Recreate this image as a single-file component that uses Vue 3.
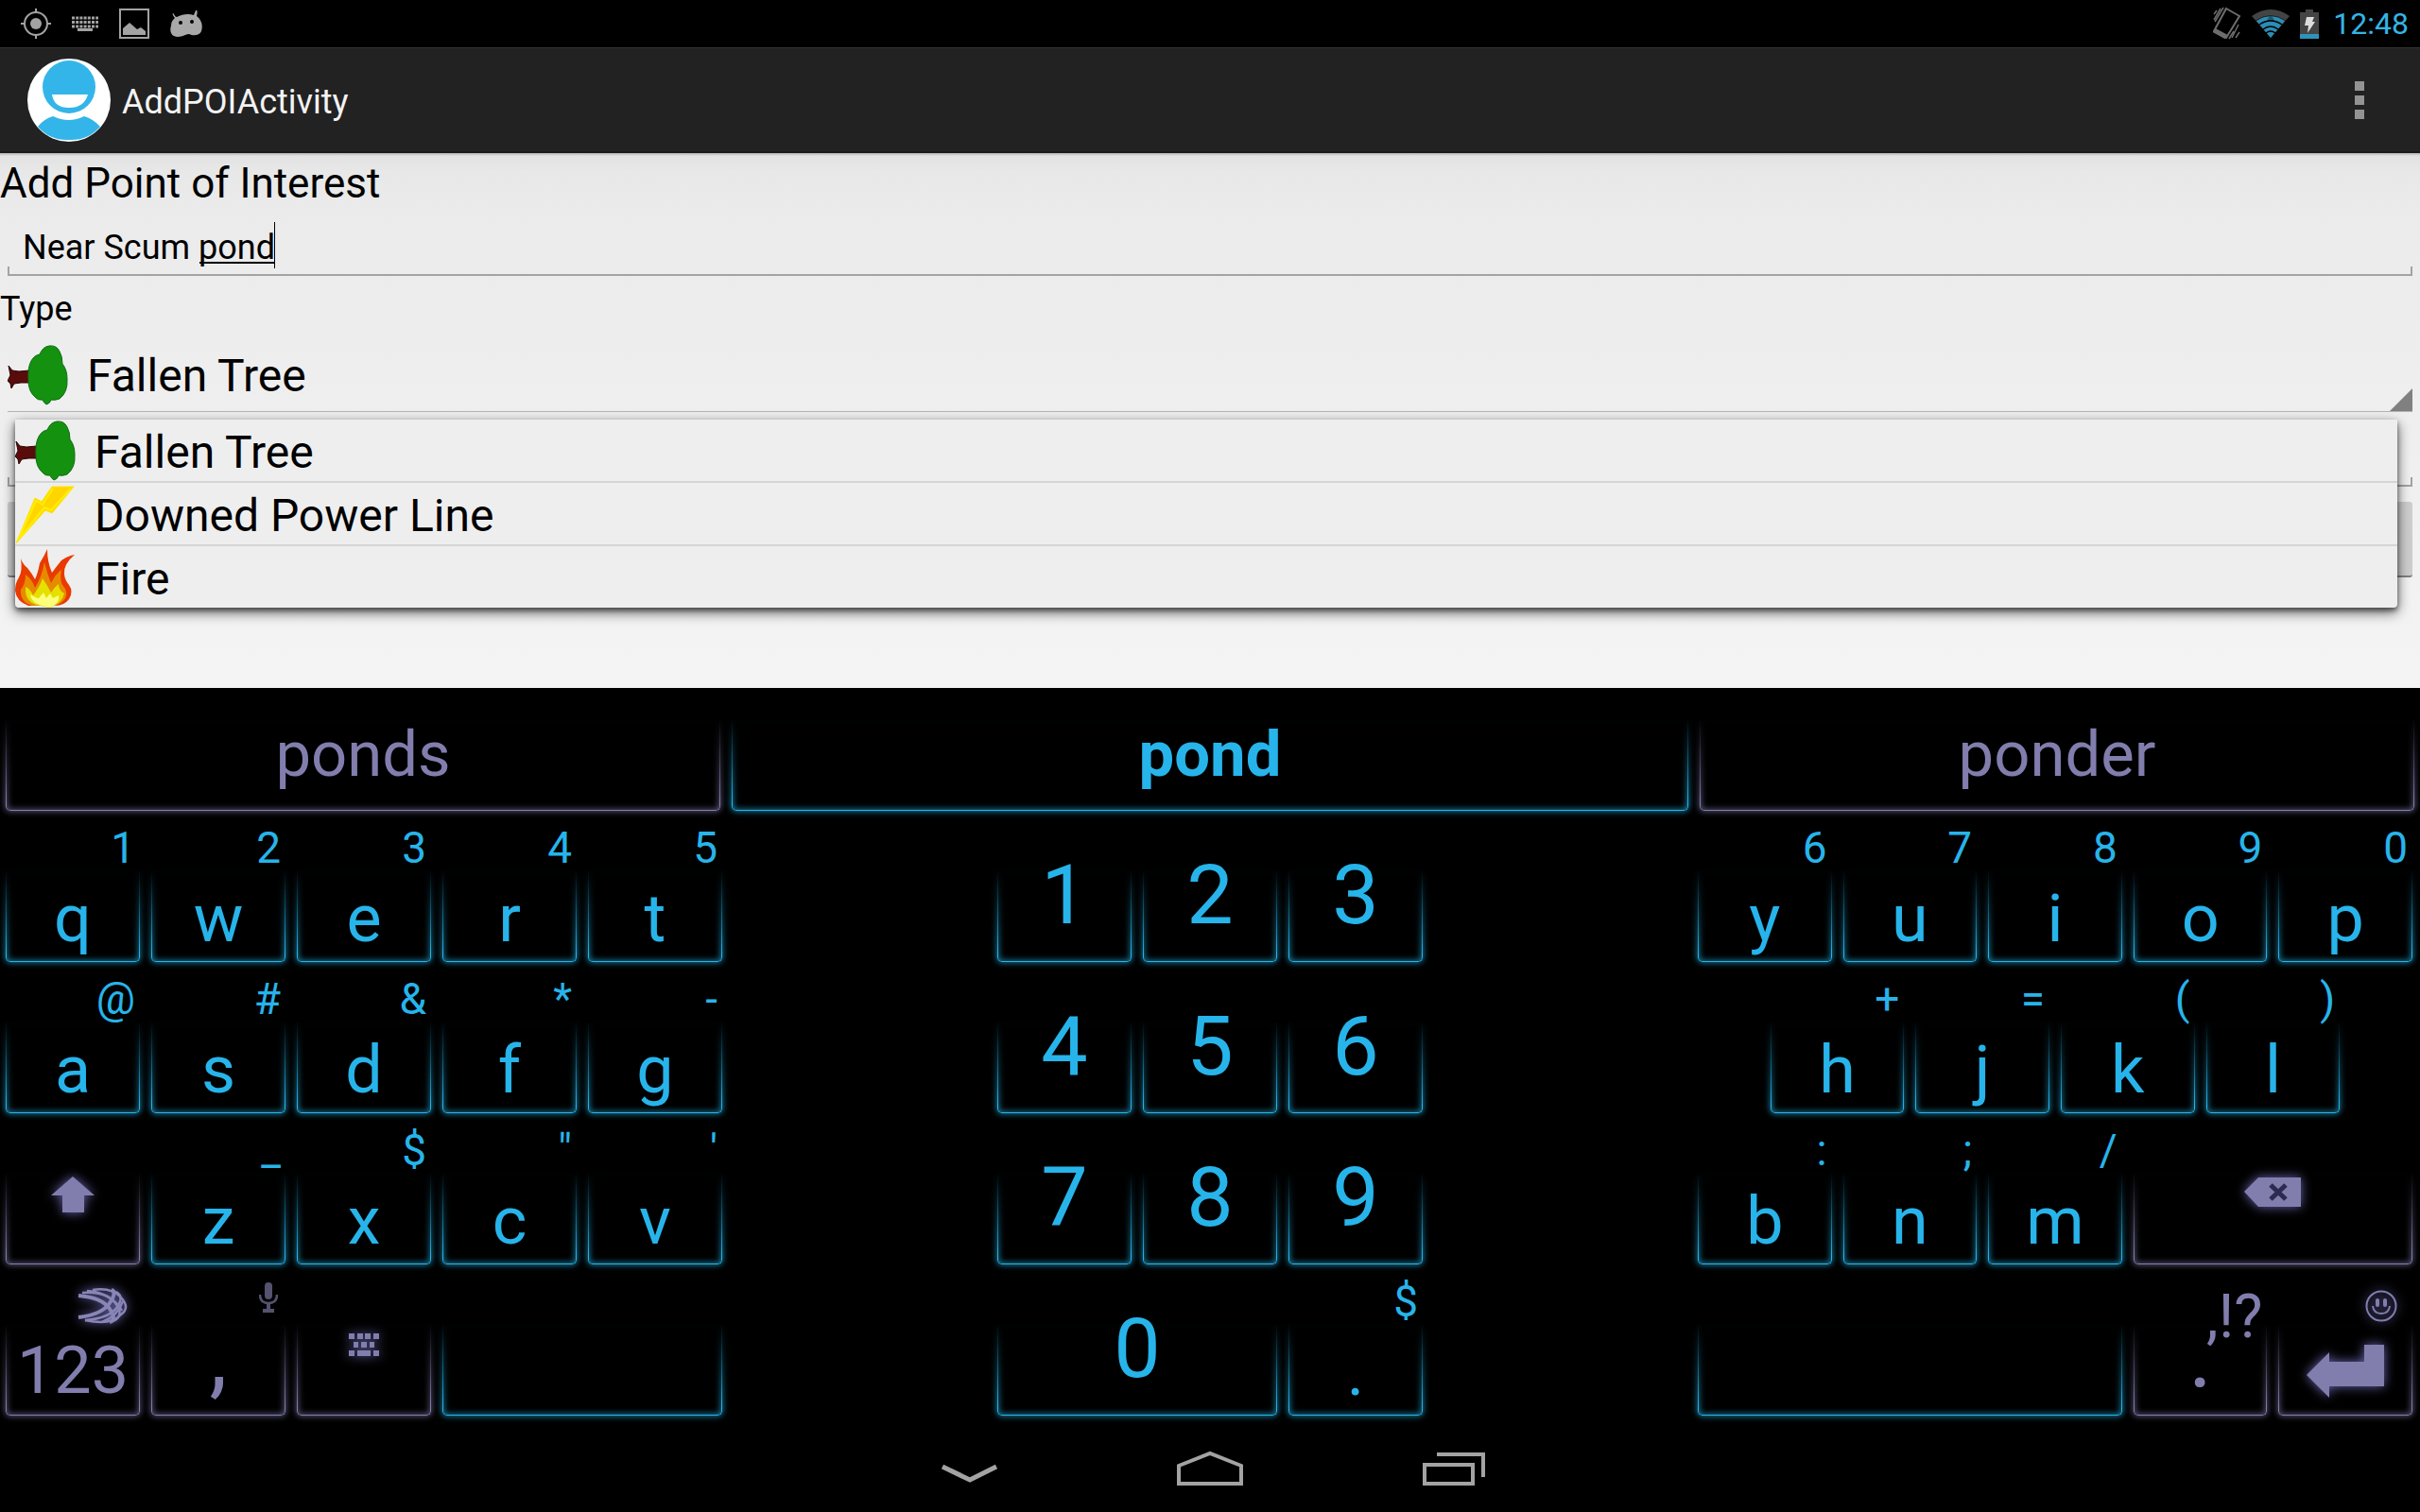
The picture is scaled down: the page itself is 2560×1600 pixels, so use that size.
<script setup>
import { ref } from 'vue'

const place = ref('Near Scum pond')
const notes = ref('')
const type = ref('Fallen Tree')

const types = [
  { name: 'Fallen Tree', icon: 'tree' },
  { name: 'Downed Power Line', icon: 'bolt' },
  { name: 'Fire', icon: 'fire' }
]

const suggestions = [
  { word: 'ponds', tone: 'mute' },
  { word: 'pond', tone: 'best' },
  { word: 'ponder', tone: 'mute' }
]

const k = (main, hint = '', extra = {}) => ({ main, hint, span: 2, ...extra })
const n = (main, extra = {}) => k(main, '', { size: 'digit', ...extra })

const blocks = [
  {
    name: 'left',
    keys: [
      k('q', '1'), k('w', '2'), k('e', '3'), k('r', '4'), k('t', '5'),
      k('a', '@'), k('s', '#'), k('d', '&'), k('f', '*'), k('g', '-'),
      k('', '', { icon: 'shift', tone: 'mute' }), k('z', '_'), k('x', '$'), k('c', '"'), k('v', "'"),
      k('123', '', { hintIcon: 'swift', tone: 'mute' }),
      k(',', '', { hintIcon: 'mic', tone: 'mute', size: 'mark' }),
      k('', '', { icon: 'layout', tone: 'mute' }),
      k('', '', { span: 4, label: 'space' })
    ]
  },
  {
    name: 'middle',
    keys: [
      n('1'), n('2'), n('3'), n('4'), n('5'), n('6'), n('7'), n('8'), n('9'),
      n('0', { span: 4 }), k('.', '$')
    ]
  },
  {
    name: 'right',
    keys: [
      k('y', '6'), k('u', '7'), k('i', '8'), k('o', '9'), k('p', '0'),
      k('h', '+', { start: 2 }), k('j', '='), k('k', '('), k('l', ')'),
      k('b', ':', { start: 1 }), k('n', ';'), k('m', '/'), k('', '', { icon: 'delete', tone: 'mute', span: 4 }),
      k('', '', { span: 6, label: 'space' }),
      k('.', ',!?', { tone: 'mute', size: 'mark', bigHint: true }),
      k('', '', { icon: 'enter', hintIcon: 'smile', tone: 'mute' })
    ]
  }
]

const column = (key) => ({ gridColumn: (key.start ? key.start + ' / ' : '') + 'span ' + key.span })
</script>

<template>
  <div class="screen">
    <header class="status">
      <div class="notices">
        <svg width="32" height="34" viewBox="0 0 32 34">
          <g fill="none" stroke="#a3a3a3" stroke-width="2"><circle cx="16" cy="17" r="12" /><path d="M16 1v5M16 28v5M0 17h5M27 17h5" /></g>
          <circle cx="16" cy="17" r="6" fill="#a3a3a3" />
        </svg>
        <svg width="28" height="16" viewBox="0 0 28 16" fill="none" stroke="#a3a3a3" stroke-width="3">
          <path d="M0 2h28" stroke-dasharray="3 1.2" /><path d="M0 6.500h28" stroke-dasharray="3 1.2" /><path d="M0 11h28" stroke-dasharray="3 1.2" /><path d="M6 14.500h16" />
        </svg>
        <svg width="32" height="32" viewBox="0 0 32 32">
          <rect x="1" y="1" width="30" height="30" fill="none" stroke="#a3a3a3" stroke-width="2" />
          <path d="M4 28V21l7-6 8 7 4-2 5 4v4z" fill="#a3a3a3" />
        </svg>
        <svg width="34" height="28" viewBox="0 0 34 28">
          <path d="M3 3c1 0 2 4 4 4C13 4 19 3 25 5l2-5c2 0 2 1 1 6 5 4 7 9 5 16-2 5-9 5-13 3-4 0-6 3-12 3-7 0-9-6-7-12 0-4 2-6 4-8-2-2-3-5-2-5z" fill="#a8a8a8" />
          <circle cx="11" cy="13" r="2" fill="#000" /><circle cx="23" cy="12" r="2" fill="#000" />
        </svg>
      </div>
      <div class="system">
        <svg width="30" height="36" viewBox="0 0 30 36" fill="none" stroke="#6d6d6d" stroke-width="1.500">
          <path d="M14 2l14 8-14 23L1 26z" stroke-width="2" /><path d="M1 25l13 7" stroke-width="5" />
          <path d="M4 4L1 8M8 2L1 14M11 1L2 16M20 33l7-14M17 34l5-8M24 33l4-6" />
        </svg>
        <svg width="40" height="32" viewBox="0 0 40 32">
          <path d="M20 31L0 8Q20 -6 40 8z" fill="#444" /><path d="M20 31L5 13Q20 3 35 13z" fill="#2c8db5" />
          <path d="M16 13l4-8 4 8z" fill="#1d5b75" />
          <g fill="none" stroke="#000" stroke-width="1.500"><path d="M4 13Q20 2 36 13" stroke="#222" stroke-width="1" /><path d="M8 17Q20 9 32 17M12 22Q20 16 28 22M15 26Q20 22 25 26" /></g>
        </svg>
        <svg width="20" height="32" viewBox="0 0 20 32">
          <path d="M6 1h8v3h6v28H0V4h6z" fill="#444" /><path d="M0 27h20v5H0z" fill="#2f92bb" />
          <path d="M7 9h8l-2 5h3l-8 12 1-8H5z" fill="#ddd" />
        </svg>
        <time>12:48</time>
      </div>
    </header>

    <div class="actionbar">
      <svg width="88" height="88" viewBox="0 0 88 88">
        <circle cx="44" cy="44" r="44" fill="#fff" />
        <path d="M11 72Q17 64 27 61Q44 69 60 61Q70 64 77 72Q64 87 44 86Q24 87 11 72z" fill="#33b5e9" />
        <ellipse cx="44" cy="30" rx="28" ry="28" fill="#33b5e9" />
        <path d="M26 38h38Q60 52 44 52T26 38z" fill="#fff" />
      </svg>
      <h1>AddPOIActivity</h1>
      <button class="overflow" type="button" aria-label="More options"><i></i><i></i><i></i></button>
    </div>

    <main>
      <h2><label for="place">Add Point of Interest</label></h2>
      <div class="field">
        <input id="place" v-model="place" type="text">
        <span class="composing"></span>
      </div>
      <label class="caption" for="type">Type</label>
      <div class="spinner">
        <svg class="pic" viewBox="0 0 64 64"><use href="#icon-tree" /></svg>
        <select id="type" v-model="type">
          <option v-for="t in types" :key="t.name">{{ t.name }}</option>
        </select>
        <ul class="popup">
          <li v-for="t in types" :key="t.name">
            <button type="button" @click="type = t.name">
              <svg class="pic" viewBox="0 0 64 64"><use :href="'#icon-' + t.icon" /></svg>
              <span>{{ t.name }}</span>
            </button>
          </li>
        </ul>
      </div>
      <div class="field second"><input v-model="notes" type="text" aria-label="Notes"></div>
      <button class="save" type="button" aria-label="Save"></button>
    </main>

    <section class="keyboard">
      <div class="suggestions">
        <button v-for="s in suggestions" :key="s.word" type="button" class="key" :class="s.tone">
          <span class="frame"></span>{{ s.word }}
        </button>
      </div>
      <div class="blocks">
        <div v-for="b in blocks" :key="b.name" class="block" :class="b.name">
          <button
            v-for="(key, i) in b.keys" :key="i" type="button" class="key"
            :class="[key.tone, key.size]" :style="column(key)" :aria-label="key.icon || key.label"
          >
            <span class="frame"></span>
            <span v-if="key.size !== 'digit'" class="hint" :class="[{ big: key.bigHint }, key.hintIcon]">
              <svg v-if="key.hintIcon === 'swift'" class="glow" width="50" height="38" viewBox="0 0 50 38" fill="none" stroke="#8986b6" stroke-width="2.500">
                <path d="M16 2Q36-1 46 10T46 28Q36 40 8 34" /><path d="M5 5Q30 3 40 16T38 35" /><path d="M1 8Q26 10 34 22T34 36" stroke-width="4" />
                <path d="M1 31Q26 28 34 16T36 2" stroke-width="4" /><path d="M8 34Q34 32 42 20T40 4" /><path d="M10 3Q36 5 47 24" /><path d="M26 36Q42 30 48 14" />
              </svg>
              <svg v-if="key.hintIcon === 'mic'" width="20" height="32" viewBox="0 0 20 32" fill="#55526f">
                <rect x="6" width="8" height="18" rx="4" /><path d="M1 13q0 9 9 9t9-9" fill="none" stroke="#55526f" stroke-width="2.500" /><path d="M8 22h4v6h4v4H4v-4h4z" />
              </svg>
              <svg v-if="key.hintIcon === 'smile'" class="glow" width="34" height="34" viewBox="0 0 34 34" fill="none" stroke="#817eae" stroke-width="2">
                <circle cx="17" cy="17" r="15.500" /><path d="M8 17q1 8 9 8t9-8" /><path d="M13 11v5M21 11v5" stroke-width="4" stroke-linecap="round" />
              </svg>
              {{ key.hint }}
            </span>
            <span v-if="key.main" class="main">{{ key.main }}</span>
            <svg v-if="key.icon === 'shift'" class="glyph glow" width="46" height="40" viewBox="0 0 46 40"><path d="M23 1l23 20H35v18H12V21H0z" fill="#817eae" /></svg>
            <svg v-if="key.icon === 'delete'" class="glyph glow" width="60" height="40" viewBox="0 0 60 40">
              <path d="M0 17L15 2h45v31H15z" fill="#817eae" /><path d="M28 10l16 15M44 10L28 25" stroke="#2b2a50" stroke-width="5" />
            </svg>
            <svg v-if="key.icon === 'layout'" class="glyph low glow" width="32" height="24" viewBox="0 0 32 24" fill="#817eae">
              <path d="M0 0h6v6H0zM9 0h6v6H9zM17 0h6v6h-6zM26 0h6v6h-6zM5 9h5v6H5zM13 9h6v6h-6zM22 9h5v6h-5zM0 18h6v6H0zM9 18h14v6H9zM26 18h6v6h-6z" />
            </svg>
            <svg v-if="key.icon === 'enter'" class="return glow" width="82" height="56" viewBox="0 0 82 56"><path d="M0 32L24 8v10h37V0h21v44H24v12z" fill="#817eae" /></svg>
          </button>
        </div>
      </div>
    </section>

    <nav>
      <button type="button" aria-label="Hide keyboard">
        <svg width="72" height="40" viewBox="0 0 72 40"><path d="M9 18l29 14 28-14" fill="none" stroke="#a3a3a3" stroke-width="5" /></svg>
      </button>
      <button type="button" aria-label="Home">
        <svg width="72" height="40" viewBox="0 0 72 40"><path d="M3 36V17L36 4l33 13v19z" fill="none" stroke="#a3a3a3" stroke-width="4" /></svg>
      </button>
      <button type="button" aria-label="Recent apps">
        <svg width="72" height="40" viewBox="0 0 72 40"><path d="M7 16h51v20H7zM20 5h49v24" fill="none" stroke="#a3a3a3" stroke-width="4" /></svg>
      </button>
    </nav>

    <svg class="defs" width="0" height="0" aria-hidden="true">
      <symbol id="icon-tree" viewBox="0 0 64 64">
        <path d="M1 22L5 27 12 28 23 27V40L14 40 7 41 4 46 3 41 0 38 3 32z" fill="#5a0b0b" stroke="#2a0808" stroke-width="1" />
        <path d="M41 63Q38 61 37 58Q32 59 29 55Q22 49 22 38Q21 24 25 17Q28 11 34 10Q37 2 44 1Q52 0 55 7Q58 12 58 20Q63 26 63 36Q64 50 55 57Q50 59 46 58Q45 62 41 63z" fill="#14920f" stroke="#0f6b14" stroke-width="1" />
      </symbol>
      <symbol id="icon-bolt" viewBox="0 0 64 64">
        <path d="M1 63L21 15 28 19 39 3H62L39 31 32 28z" fill="#ffd500" stroke="#ffe600" stroke-width="1" /><path d="M3 60L22 18 29 22 40 5" fill="none" stroke="#ffee00" stroke-width="2" /><path d="M59 5L38 28 31 25 6 56" fill="none" stroke="#ffee00" stroke-width="2" />
      </symbol>
      <symbol id="icon-fire" viewBox="0 0 64 64">
        <path d="M14 62Q1 57 0 46Q0 38 4 32Q8 25 6 12Q8 18 13 22Q18 28 21 34Q24 28 26 17Q31 9 34 2Q34 16 39 27Q44 20 49 14Q56 9 63 8Q51 18 52 28Q52 34 57 40Q62 47 57 55Q52 62 42 62z" fill="#e93a00" />
        <path d="M18 62Q5 58 6 45Q11 39 11 29Q18 34 21 43Q28 32 31 16Q34 28 38 38Q43 28 49 24Q46 37 53 44Q58 56 42 62z" fill="#e68a00" />
        <path d="M22 61Q10 57 11 42Q16 44 19 51Q26 42 29 33Q34 40 38 48Q42 42 46 39Q46 46 52 49Q50 59 37 64z" fill="#e6e000" />
        <path d="M26 61Q17 58 16 50Q24 55 25 54L30 48 33 54 37 49 40 54 46 51Q48 59 37 64z" fill="#fdff7c" />
      </symbol>
    </svg>
  </div>
</template>

<style>
body { margin: 0; background: #000; }
</style>

<style scoped>
.screen { min-height: 100vh; display: flex; flex-direction: column; background: #000; color: #000; font-family: Roboto, "Noto Sans", sans-serif; }
.screen * { box-sizing: border-box; }
button, input, select { margin: 0; padding: 0; border: 0; background: none; color: inherit; font: inherit; outline: 0; }
svg { display: block; flex: none; }
.defs { position: absolute; }

.status { height: 50px; padding: 0 12px 0 22px; display: flex; align-items: center; justify-content: space-between; }
.notices { display: flex; align-items: center; gap: 22px; }
.system { display: flex; align-items: center; gap: 11px; }
time { margin-left: 4px; color: #33b5e5; font-size: 32px; line-height: 50px; }

.actionbar { height: 112px; padding: 0 59px 0 29px; display: flex; align-items: center; gap: 12px; background: #222; border-top: 1px solid #333; border-bottom: 2px solid #181818; }
h1 { flex: 1; margin: 0; padding-top: 4px; color: #f3f3f3; font-size: 36px; line-height: 56px; font-weight: 400; }
.overflow { display: flex; flex-direction: column; gap: 5px; }
.overflow i { width: 10px; height: 10px; background: #939393; }

main { flex: 1; padding-bottom: 117px; background: linear-gradient(#b0b0b0, #e2e2e2 3px, #e8e8e8 20px, #ebebeb 60px, #f4f4f4); }
h2 { margin: 0; font-size: 44px; line-height: 64px; font-weight: 400; }
h2 label { display: block; }
.field { position: relative; height: 66px; margin: 0 8px; }
.field::after { content: ""; position: absolute; left: 0; right: 0; bottom: 0; height: 8px; border: 2px solid #a3a3a3; border-top: 0; }
.field input { display: block; width: 100%; height: 100%; padding: 6px 16px 0; font-size: 36px; }
.composing { position: absolute; top: 9px; left: 203px; width: 80px; height: 49px; border-right: 1px solid #000; }
.composing::after { content: ""; position: absolute; left: 0; right: 0; bottom: 5px; height: 2px; background: #000; }
.caption { display: block; font-size: 36px; line-height: 70px; }
.spinner { position: relative; height: 74px; margin: 0 8px; padding-bottom: 4px; display: flex; align-items: center; border-bottom: 1px solid #b4b4b4; }
.spinner::after { content: ""; position: absolute; right: 0; bottom: 0; border-left: 24px solid transparent; border-bottom: 24px solid #808080; }
.pic { width: 64px; height: 64px; }
select { flex: 1; height: 64px; padding: 2px 0 0 20px; font-size: 48px; appearance: none; opacity: 1; }
.popup { position: absolute; z-index: 1; top: 82px; left: 8px; right: 16px; margin: 0; padding: 0; list-style: none; background: #eee; border-radius: 0 0 4px 4px; box-shadow: 0 5px 14px rgba(0, 0, 0, .6), 0 3px 5px rgba(0, 0, 0, .45); }
.popup li + li { border-top: 2px solid #d5d5d5; }
.popup button { width: 100%; height: 65px; display: flex; align-items: center; gap: 20px; font-size: 48px; line-height: 61px; text-align: left; }
.popup span { padding-top: 4px; }
.second { height: 79px; }
.save { display: block; width: calc(100% - 16px); height: 80px; margin: 16px 8px 0; background: #cdcdcd; border-bottom: 2px solid #808080; border-radius: 3px; }

.keyboard { background: #000; }
.suggestions { display: grid; grid-template-columns: 756fr 1012fr 756fr; gap: 12px; padding: 0 6px; }
.suggestions .key { height: 130px; padding-top: 10px; font-size: 67px; line-height: 120px; }
.best { font-weight: 700; }
.blocks { display: grid; grid-template-columns: 758fr 450fr 756fr; column-gap: 291px; padding: 0 8px 0 6px; }
.block { display: grid; grid-template-columns: repeat(10, 1fr); grid-auto-rows: 160px; column-gap: 12px; }
.middle { grid-template-columns: repeat(6, 1fr); }

.key { --line: #27b4ea; --halo: #167394; position: relative; min-width: 0; display: block; color: #27b4ea; text-align: center; }
.key.mute { --line: #817eae; --halo: #504d6c; color: #817eae; }
.frame { position: absolute; left: -8px; right: -8px; bottom: -8px; height: 106px; pointer-events: none; mask-image: linear-gradient(transparent, #000 90px); }
.frame::before { content: ""; position: absolute; inset: 0 8px 8px; border: 1px solid var(--line); border-top: 0; border-radius: 0 0 5px 5px; box-shadow: 0 0 6px 1px var(--halo), inset 0 0 6px 1px var(--halo); }
.block .key { height: 160px; display: flex; flex-direction: column; align-items: center; justify-content: flex-start; }
.hint { width: 100%; height: 78px; padding-right: 5px; display: flex; align-items: center; justify-content: flex-end; font-size: 46px; line-height: 78px; }
.hint.big { font-size: 64px; line-height: 112px; align-items: flex-start; }
.hint.swift, .hint.smile { padding: 10px 16px 0 0; }
.hint.mic { padding: 0 8px 8px 0; }
.main { font-size: 70px; line-height: 72px; }
.mute .main { line-height: 68px; }
.mark .main { font-size: 96px; line-height: 36px; }
.digit .main { padding-top: 39px; font-size: 88px; line-height: 100px; }
.glyph { margin-top: -12px; }
.low { margin-top: -5px; }
.return { margin-top: 7px; }
.glow { overflow: visible; filter: drop-shadow(0 0 6px #6a67b0); }

nav { height: 102px; display: flex; justify-content: center; }
nav button { width: 256px; display: flex; justify-content: center; padding-top: 36px; }
</style>
